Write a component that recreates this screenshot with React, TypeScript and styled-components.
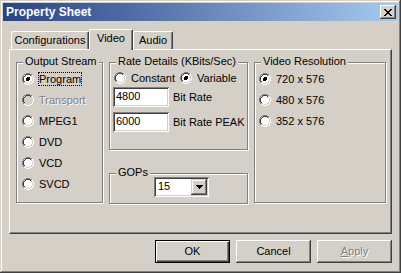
import styled, { createGlobalStyle } from 'styled-components'

const FACE = '#d4d0c8'
const SHADOW = '#808080'
const DARK = '#404040'

const GlobalStyle = createGlobalStyle`
  html, body {
    margin: 0;
    padding: 0;
    background: ${FACE};
  }
  body {
    font-family: 'Liberation Sans', Arial, sans-serif;
    font-size: 11px;
    color: #000;
  }
`

const Window = styled.div`
  width: 401px;
  height: 273px;
  box-sizing: border-box;
  padding: 3px;
  background: ${FACE};
  box-shadow: inset -1px -1px ${DARK}, inset 1px 1px ${FACE}, inset -2px -2px ${SHADOW},
    inset 2px 2px #fff;
  display: flex;
  flex-direction: column;
`

const TitleBar = styled.div`
  height: 18px;
  display: flex;
  align-items: center;
  justify-content: space-between;
  padding: 0 2px;
  background: linear-gradient(90deg, #2a4483 0%, #5877ad 40%, #a6caf0 100%);
`

const Title = styled.span`
  color: #fff;
  font-weight: bold;
  font-size: 12px;
  line-height: 14px;
  padding-left: 1px;
`

const CloseButton = styled.div`
  width: 16px;
  height: 14px;
  box-sizing: border-box;
  background: ${FACE};
  box-shadow: inset -1px -1px ${DARK}, inset 1px 1px #fff, inset -2px -2px ${SHADOW};
  display: flex;
  align-items: center;
  justify-content: center;
`

const Body = styled.div`
  flex: 1;
  display: flex;
  flex-direction: column;
  padding: 8px 6px 0 6px;
`

const TabStrip = styled.div`
  height: 20px;
  display: flex;
  align-items: flex-end;
  padding-left: 2px;
`

const Tab = styled.div<{ $w: number; $active?: boolean }>`
  width: ${(p) => p.$w}px;
  height: ${(p) => (p.$active ? 21 : 18)}px;
  margin-bottom: ${(p) => (p.$active ? -1 : 0)}px;
  position: relative;
  z-index: ${(p) => (p.$active ? 1 : 0)};
  box-sizing: border-box;
  background: ${FACE};
  border-top: 1px solid #fff;
  border-left: 1px solid #fff;
  border-right: 1px solid ${DARK};
  border-radius: 2px 2px 0 0;
  box-shadow: inset -1px 0 ${SHADOW};
  text-align: center;
  padding-top: 2px;
  line-height: 13px;
`

const Panel = styled.div`
  height: 185px;
  box-sizing: border-box;
  border-top: 1px solid #fff;
  border-left: 1px solid #fff;
  border-right: 1px solid ${DARK};
  border-bottom: 1px solid ${DARK};
  box-shadow: inset -1px -1px ${SHADOW};
  display: flex;
  align-items: flex-start;
  gap: 6px;
  padding: 12px 0 0 6px;
`

const Group = styled.div<{ $w: number; $h: number }>`
  position: relative;
  width: ${(p) => p.$w - 1}px;
  height: ${(p) => p.$h - 1}px;
  border: 1px solid ${SHADOW};
  box-shadow: 1px 1px 0 #fff, inset 1px 1px 0 #fff;
`

const Legend = styled.span`
  position: absolute;
  top: -8px;
  left: 6px;
  padding: 0 2px;
  background: ${FACE};
  line-height: 13px;
  white-space: nowrap;
`

const RadioList = styled.div<{ $pl: number }>`
  display: flex;
  flex-direction: column;
  padding: 5px 0 0 ${(p) => p.$pl}px;
`

const RadioRow = styled.div<{ $h?: number }>`
  height: ${(p) => p.$h ?? 21}px;
  display: flex;
  align-items: center;
  gap: 4px;
`

const Label = styled.span<{ $focus?: boolean; $disabled?: boolean }>`
  line-height: 12px;
  border: 1px ${(p) => (p.$focus ? 'dotted #000' : 'solid transparent')};
  color: ${(p) => (p.$disabled ? SHADOW : '#000')};
  text-shadow: ${(p) => (p.$disabled ? '1px 1px 0 #fff' : 'none')};
  white-space: nowrap;
`

const MiddleColumn = styled.div`
  display: flex;
  flex-direction: column;
  gap: 23px;
`

const RateBody = styled.div`
  display: flex;
  flex-direction: column;
  padding: 8px 0 0 4px;
`

const InlineRadios = styled.div`
  display: grid;
  grid-template-columns: 66px auto;
  height: 14px;
  margin-bottom: 2px;
`

const FieldRow = styled.div`
  display: flex;
  align-items: center;
  gap: 4px;
  margin: 0 0 5px -1px;
`

const Edit = styled.div`
  width: 56px;
  height: 20px;
  box-sizing: border-box;
  background: #fff;
  box-shadow: inset 1px 1px ${SHADOW}, inset -1px -1px #fff, inset 2px 2px ${DARK},
    inset -2px -2px ${FACE};
  padding: 3px 0 0 3px;
  line-height: 13px;
`

const GopBody = styled.div`
  padding: 3px 0 0 44px;
`

const Combo = styled.div`
  width: 55px;
  height: 20px;
  box-sizing: border-box;
  background: #fff;
  box-shadow: inset 1px 1px ${SHADOW}, inset -1px -1px #fff, inset 2px 2px ${DARK},
    inset -2px -2px ${FACE};
  padding: 2px;
  display: flex;
  justify-content: space-between;
`

const ComboText = styled.span`
  padding: 1px 0 0 2px;
  line-height: 13px;
`

const DropButton = styled.div`
  width: 16px;
  height: 16px;
  box-sizing: border-box;
  background: ${FACE};
  box-shadow: inset -1px -1px ${DARK}, inset 1px 1px ${FACE}, inset -2px -2px ${SHADOW},
    inset 2px 2px #fff;
  display: flex;
  align-items: center;
  justify-content: center;
`

const ButtonRow = styled.div`
  display: flex;
  justify-content: flex-end;
  gap: 6px;
  margin-top: 6px;
`

const Button = styled.div<{ $default?: boolean; $disabled?: boolean }>`
  width: 75px;
  height: 23px;
  box-sizing: border-box;
  background: ${FACE};
  border: 1px solid ${(p) => (p.$default ? '#000' : 'transparent')};
  box-shadow: ${(p) =>
    p.$default
      ? `inset 1px 1px #fff, inset -1px -1px ${DARK}, inset -2px -2px ${SHADOW}`
      : `inset -1px -1px ${DARK}, inset 1px 1px #fff, inset -2px -2px ${SHADOW}, inset 2px 2px ${FACE}`};
  ${(p) => !p.$default && 'border: none;'}
  display: flex;
  align-items: center;
  justify-content: center;
  color: ${(p) => (p.$disabled ? SHADOW : '#000')};
  text-shadow: ${(p) => (p.$disabled ? '1px 1px 0 #fff' : 'none')};
  line-height: 13px;
`

const Underline = styled.span`
  text-decoration: underline;
`

function Radio({ checked, disabled }: { checked?: boolean; disabled?: boolean }) {
  return (
    <svg width="12" height="12" viewBox="0 0 12 12" shapeRendering="crispEdges">
      <path d="M2.11 9.89A5.5 5.5 0 0 1 9.89 2.11" stroke={SHADOW} fill="none" />
      <path d="M9.89 2.11A5.5 5.5 0 0 1 2.11 9.89" stroke="#fff" fill="none" />
      <path d="M2.82 9.18A4.5 4.5 0 0 1 9.18 2.82" stroke={DARK} fill="none" />
      <path d="M9.18 2.82A4.5 4.5 0 0 1 2.82 9.18" stroke={FACE} fill="none" />
      <circle cx="6" cy="6" r="4" fill={disabled ? FACE : '#fff'} />
      {checked && <circle cx="6" cy="6" r="2" fill="#000" />}
    </svg>
  )
}

function CloseGlyph() {
  const rows = [0, 1, 2, 3, 4, 5, 6]
  return (
    <svg width="8" height="7" viewBox="0 0 8 7" shapeRendering="crispEdges">
      {rows.map((i) => (
        <g key={i}>
          <rect x={i} y={i} width="2" height="1" fill="#000" />
          <rect x={6 - i} y={i} width="2" height="1" fill="#000" />
        </g>
      ))}
    </svg>
  )
}

const streams = [
  { label: 'Program', checked: true, focus: true },
  { label: 'Transport', disabled: true },
  { label: 'MPEG1' },
  { label: 'DVD' },
  { label: 'VCD' },
  { label: 'SVCD' },
]

const resolutions = ['720 x 576', '480 x 576', '352 x 576']

export default function App() {
  return (
    <>
      <GlobalStyle />
      <Window>
        <TitleBar>
          <Title>Property Sheet</Title>
          <CloseButton>
            <CloseGlyph />
          </CloseButton>
        </TitleBar>
        <Body>
          <TabStrip>
            <Tab $w={78}>Configurations</Tab>
            <Tab $w={44} $active>
              Video
            </Tab>
            <Tab $w={40}>Audio</Tab>
          </TabStrip>
          <Panel>
            <Group $w={86} $h={140}>
              <Legend>Output Stream</Legend>
              <RadioList $pl={5}>
                {streams.map((s) => (
                  <RadioRow key={s.label}>
                    <Radio checked={s.checked} disabled={s.disabled} />
                    <Label $focus={s.focus} $disabled={s.disabled}>
                      {s.label}
                    </Label>
                  </RadioRow>
                ))}
              </RadioList>
            </Group>
            <MiddleColumn>
              <Group $w={138} $h={87}>
                <Legend>Rate Details (KBits/Sec)</Legend>
                <RateBody>
                  <InlineRadios>
                    <RadioRow $h={14}>
                      <Radio />
                      <Label>Constant</Label>
                    </RadioRow>
                    <RadioRow $h={14}>
                      <Radio checked />
                      <Label>Variable</Label>
                    </RadioRow>
                  </InlineRadios>
                  <FieldRow>
                    <Edit>4800</Edit>
                    <span>Bit Rate</span>
                  </FieldRow>
                  <FieldRow>
                    <Edit>6000</Edit>
                    <span>Bit Rate PEAK</span>
                  </FieldRow>
                </RateBody>
              </Group>
              <Group $w={138} $h={30}>
                <Legend>GOPs</Legend>
                <GopBody>
                  <Combo>
                    <ComboText>15</ComboText>
                    <DropButton>
                      <svg width="7" height="4" viewBox="0 0 7 4" shapeRendering="crispEdges">
                        <path d="M0 0H7L3.5 4Z" fill="#000" />
                      </svg>
                    </DropButton>
                  </Combo>
                </GopBody>
              </Group>
            </MiddleColumn>
            <Group $w={131} $h={140}>
              <Legend>Video Resolution</Legend>
              <RadioList $pl={4}>
                {resolutions.map((r, i) => (
                  <RadioRow key={r}>
                    <Radio checked={i === 0} />
                    <Label>{r}</Label>
                  </RadioRow>
                ))}
              </RadioList>
            </Group>
          </Panel>
          <ButtonRow>
            <Button $default>OK</Button>
            <Button>Cancel</Button>
            <Button $disabled>
              <span>
                <Underline>A</Underline>pply
              </span>
            </Button>
          </ButtonRow>
        </Body>
      </Window>
    </>
  )
}
